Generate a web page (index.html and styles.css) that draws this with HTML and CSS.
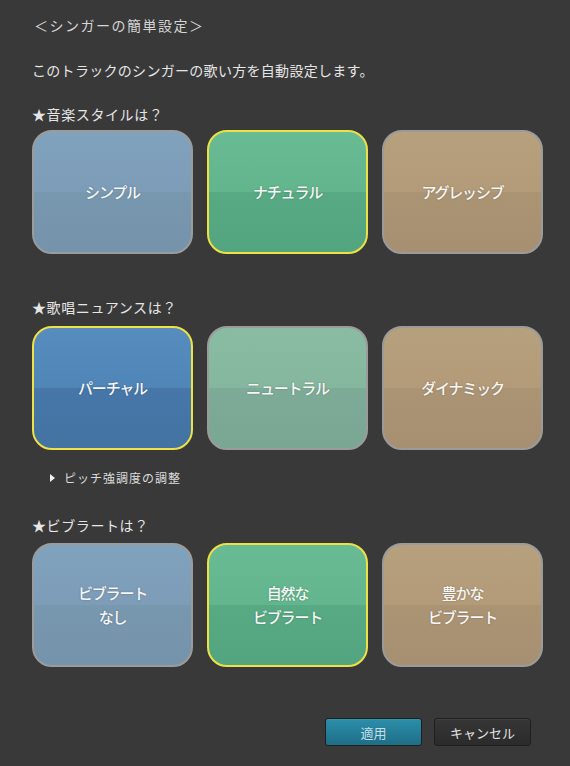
FILE: index.html
```html
<!DOCTYPE html>
<html lang="ja">
<head>
    <meta charset="UTF-8">
    <meta name="viewport" content="width=device-width, initial-scale=1.0">
    <title>シンガーの簡単設定</title>
    <link rel="stylesheet" href="styles.css">
</head>
<body>
    <div class="dialog">
        <div class="title">＜シンガーの簡単設定＞</div>
        <div class="desc">このトラックのシンガーの歌い方を自動設定します。</div>

        <div class="heading first">★音楽スタイルは？</div>
        <div class="choices">
            <div class="choice blue">シンプル</div>
            <div class="choice green selected">ナチュラル</div>
            <div class="choice tan">アグレッシブ</div>
        </div>

        <div class="heading">★歌唱ニュアンスは？</div>
        <div class="choices">
            <div class="choice deep-blue selected">パーチャル</div>
            <div class="choice teal">ニュートラル</div>
            <div class="choice tan">ダイナミック</div>
        </div>

        <div class="pitch"><span class="arrow"></span>ピッチ強調度の調整</div>

        <div class="heading third">★ビブラートは？</div>
        <div class="choices">
            <div class="choice blue">ビブラート<br>なし</div>
            <div class="choice green selected">自然な<br>ビブラート</div>
            <div class="choice tan">豊かな<br>ビブラート</div>
        </div>

        <div class="actions">
            <button class="btn primary">適用</button>
            <button class="btn">キャンセル</button>
        </div>
    </div>
</body>
</html>
```

FILE: styles.css
```css
body {
    margin: 0;
    background: #393939;
    font-family: 'Noto Sans CJK JP', 'Noto Sans', sans-serif;
    color: #e6e6e6;
}

.dialog {
    padding: 15px 0 0 32px;
}

.title {
    padding-left: 2px;
    font-size: 14px;
    line-height: 20px;
    letter-spacing: 1.5px;
    color: #d6d6d6;
}

.desc {
    margin-top: 25px;
    font-size: 14px;
    line-height: 20px;
    letter-spacing: 0.3px;
}

.heading {
    margin: 43px 0 9px;
    font-size: 14px;
    line-height: 20px;
    letter-spacing: 0.6px;
}

.heading.first {
    margin: 24px 0 6px;
}

.heading.third {
    margin: 29px 0 8px;
}

.choices {
    display: flex;
    gap: 14px;
}

.choice {
    box-sizing: border-box;
    width: 161px;
    height: 124px;
    display: flex;
    align-items: center;
    justify-content: center;
    text-align: center;
    border: 2px solid #9b9b9b;
    border-radius: 20px;
    font-size: 15px;
    font-weight: 500;
    line-height: 24px;
    letter-spacing: -1.2px;
    color: #f6f6f6;
    text-shadow: 0 0 2px rgba(0, 0, 0, 0.25);
}

.choice.selected {
    border-color: #eee146;
}

.blue {
    background: linear-gradient(to bottom, #81a2bd 0%, #7c9cb7 50%, #7898af 50%, #7593aa 100%);
}

.green {
    background: linear-gradient(to bottom, #68bb93 0%, #62b58d 50%, #57aa83 50%, #53a57f 100%);
}

.tan {
    background: linear-gradient(to bottom, #b7a07d 0%, #b39b79 50%, #ab9474 50%, #a78f71 100%);
}

.deep-blue {
    background: linear-gradient(to bottom, #568cbe 0%, #5085b8 50%, #4677a8 50%, #4373a3 100%);
}

.teal {
    background: linear-gradient(to bottom, #8abca3 0%, #85b69e 50%, #7eab97 50%, #7aa793 100%);
}

.pitch {
    display: flex;
    align-items: center;
    margin: 20px 0 0 18px;
    font-size: 12px;
    line-height: 16px;
    letter-spacing: 1px;
    color: #dcdcdc;
}

.arrow {
    width: 0;
    height: 0;
    margin-right: 9px;
    border-top: 4px solid transparent;
    border-bottom: 4px solid transparent;
    border-left: 5px solid #f0f0f0;
}

.actions {
    display: flex;
    justify-content: flex-end;
    gap: 12px;
    margin-top: 51px;
    padding-right: 39px;
}

.btn {
    width: 97px;
    height: 28px;
    padding: 0;
    border: 1px solid #1f1f1f;
    border-radius: 3px;
    background: linear-gradient(to bottom, #363636, #2b2b2b);
    color: #e2e2e2;
    font-family: inherit;
    font-size: 13px;
    box-shadow: inset 0 1px 0 rgba(255, 255, 255, 0.06);
}

.btn.primary {
    background: linear-gradient(to bottom, #2b8eaa, #1e6e87);
    color: #c5dde6;
}
```
